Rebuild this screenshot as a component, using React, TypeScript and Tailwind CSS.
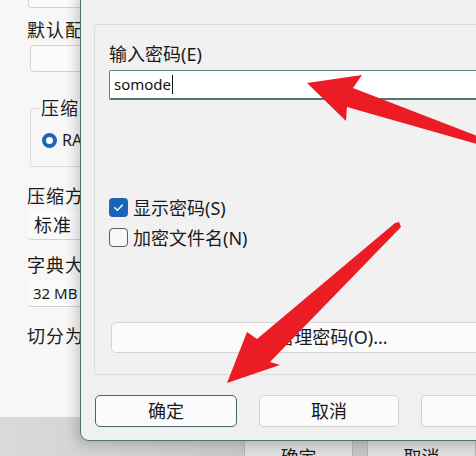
import React from "react";

const font = { fontFamily: '"Noto Sans", "Noto Sans CJK SC", sans-serif' };

function Checkbox({ checked, label }: { checked?: boolean; label: string }) {
  return (
    <div className="flex items-center gap-[5px] h-[19px]">
      {checked ? (
        <span className="w-[19px] h-[19px] shrink-0 rounded-[4px] bg-[#1b64b8] flex items-center justify-center">
          <svg width="13" height="13" viewBox="0 0 12 12">
            <path d="M2.5 6.2 L5 8.6 L9.6 3.6" fill="none" stroke="#fff" strokeWidth="1.3" strokeLinecap="round" strokeLinejoin="round" />
          </svg>
        </span>
      ) : (
        <span className="w-[19px] h-[19px] shrink-0 rounded-[4px] border border-[#5c5c5c] bg-[#f7f7f7]" />
      )}
      <span className="text-[18px] text-[#1a1a1a] leading-none">{label}</span>
    </div>
  );
}

function Arrows() {
  return (
    <svg className="absolute inset-0 pointer-events-none" width="476" height="456" viewBox="0 0 476 456">
      <polygon
        points="307,83 362,75 353,88 480,137 480,145 347,107 346,121"
        fill="#ec1c24"
      />
      <polygon
        points="227,383 247,332 257,339 395,223 399,222 401,227 270,362 280,365"
        fill="#ec1c24"
      />
    </svg>
  );
}

export default function App() {
  return (
    <div className="relative w-[476px] h-[456px] overflow-hidden bg-[#c8c8c8]" style={font}>
      {/* background window */}
      <div className="flex flex-col h-full">
        <div className="h-[417px] shrink-0 bg-[#f7f7f7] pl-[27px] flex flex-col">
          <div className="mt-[-20px] h-[28px] w-[60px] ml-[1px] border border-[#d4d4d4] rounded-[3px] bg-[#fbfbfb]" />
          <div className="mt-[12px] text-[18px] leading-[20px] tracking-[1px] text-[#1a1a1a] whitespace-nowrap">默认配置</div>
          <div className="mt-[5px] ml-[3px] h-[27px] w-[60px] border border-[#d4d4d4] rounded-[4px] bg-[#fbfbfb]" />
          <div className="mt-[36px] ml-[3px] w-[60px] h-[59px] border border-[#dadada] rounded-[3px] relative">
            <div className="absolute left-[9px] top-[-11px] bg-[#f7f7f7] px-[1px] text-[18px] leading-[20px] tracking-[1px] text-[#1a1a1a] whitespace-nowrap">
              压缩方式
            </div>
            <div className="flex items-center gap-[5px] ml-[11px] mt-[23px] w-[120px]">
              <span className="w-[15px] h-[15px] shrink-0 rounded-full border-[4.5px] border-[#1b64b8] bg-white" />
              <span className="text-[16px] leading-none text-[#1a1a1a]">RAR</span>
            </div>
          </div>
          <div className="mt-[19px] text-[18px] leading-[20px] tracking-[1px] text-[#1a1a1a] whitespace-nowrap">压缩方法</div>
          <div className="mt-[5px] ml-[1px] h-[29px] w-[60px] border-b border-[#d2d2d2] rounded-[4px] bg-[#fbfbfb] flex items-center pl-[6px] text-[18px] tracking-[1px] text-[#1a1a1a]">
            标准
          </div>
          <div className="mt-[15px] text-[18px] leading-[20px] tracking-[1px] text-[#1a1a1a] whitespace-nowrap">字典大小</div>
          <div className="mt-[6px] ml-[1px] h-[26px] w-[60px] border-b border-[#d2d2d2] rounded-[4px] bg-[#fbfbfb] flex items-center pl-[5px] text-[15px] text-[#1a1a1a]">
            32 MB
          </div>
          <div className="mt-[19px] text-[18px] leading-[20px] tracking-[1px] text-[#1a1a1a] whitespace-nowrap">切分为分卷</div>
        </div>
        <div className="flex-1 bg-gradient-to-r from-[#dadada] via-[#c9c9c9] to-[#c2c2c2] flex items-start gap-[14px] pl-[244px] pt-[12px]">
          <div className="w-[126px] h-[40px] bg-[#dedede] border-x border-[#b4b4b4] flex justify-center pt-[15px] text-[18px] text-[#1a1a1a]">确定</div>
          <div className="w-[126px] h-[40px] bg-[#dedede] border-x border-[#b4b4b4] flex justify-center pt-[15px] text-[18px] text-[#1a1a1a]">取消</div>
        </div>
      </div>

      {/* password dialog */}
      <div className="absolute left-[80px] top-[-12px] w-[560px] h-[453px] bg-[#f0f0f0] border border-[#4d7474] rounded-bl-[9px] shadow-[-4px_4px_12px_rgba(0,0,0,0.18)] pt-[35px] pl-[13px]">
        <div className="w-[560px] h-[351px] border border-[#dcdcdc] rounded-[3px] bg-[#f1f1f1] pt-[19px] pl-[14px] flex flex-col">
          <div className="text-[18px] leading-[20px] text-[#1a1a1a]">输入密码(E)</div>
          <div className="mt-[6px] h-[30px] w-[540px] bg-white border border-[#6a8585] border-b-2 border-b-[#587474] rounded-[2px] flex items-center pl-[4px]">
            <span className="text-[15px] text-[#111] leading-none">somode</span>
            <span className="w-[1px] h-[19px] bg-[#111] ml-[1px]" />
          </div>
          <div className="mt-[98px] flex flex-col gap-[11px]">
            <Checkbox checked label="显示密码(S)" />
            <Checkbox label="加密文件名(N)" />
          </div>
          <div className="mt-[75px] ml-[2px] w-[442px] h-[31px] bg-[#fbfbfb] border border-[#d6d6d6] rounded-[5px] flex items-center justify-center text-[18px] text-[#1a1a1a]">
            管理密码(O)...
          </div>
        </div>
        <div className="mt-[20px] flex gap-[22px] ml-[1px]">
          <div className="w-[142px] h-[32px] bg-[#fbfbfb] border border-[#46686a] rounded-[5px] flex items-center justify-center text-[18px] text-[#1a1a1a]">确定</div>
          <div className="w-[140px] h-[32px] bg-[#fbfbfb] border border-[#d2d2d2] rounded-[5px] flex items-center justify-center text-[18px] text-[#1a1a1a]">取消</div>
          <div className="w-[148px] h-[32px] bg-[#fbfbfb] border border-[#d2d2d2] rounded-[5px] flex items-center justify-center text-[18px] text-[#1a1a1a]">帮助</div>
        </div>
      </div>

      <Arrows />
    </div>
  );
}
